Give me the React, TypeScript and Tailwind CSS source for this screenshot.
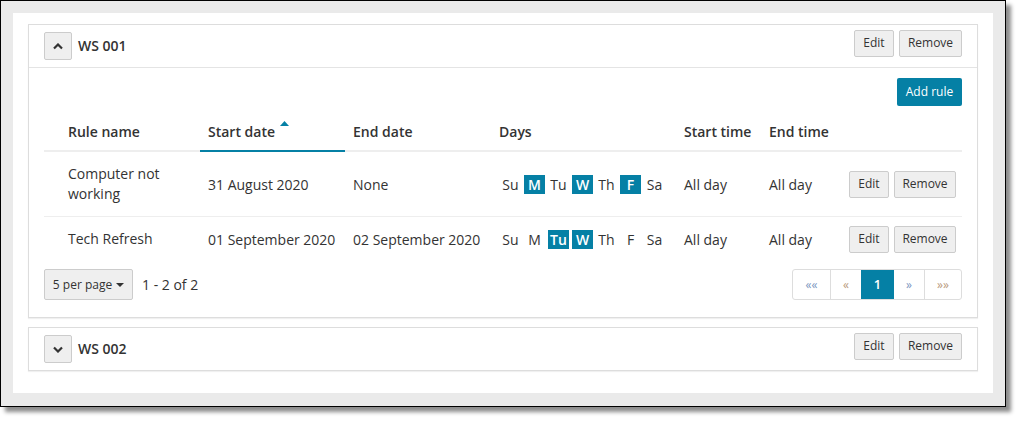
import React from 'react';

interface Rule {
  name: string;
  start: string;
  end: string;
  days: string[];
  rowHeight: string;
}

const DAYS = ['Su', 'M', 'Tu', 'W', 'Th', 'F', 'Sa'];

const rules: Rule[] = [
  { name: 'Computer not working', start: '31 August 2020', end: 'None', days: ['M', 'W', 'F'], rowHeight: 'h-[65px] border-b border-[#eeeeee]' },
  { name: 'Tech Refresh', start: '01 September 2020', end: '02 September 2020', days: ['Tu', 'W'], rowHeight: 'h-[44px]' },
];

const cols = 'grid grid-cols-[156px_145px_146px_185px_85px_80px_121px]';

function GreyButton({ label, className = '' }: { label: string; className?: string }) {
  return (
    <button className={`h-[27px] rounded-[2px] border border-[#cccccc] bg-[#efefef] text-[12px] text-[#333] ${className}`}>
      {label}
    </button>
  );
}

function Chevron({ up }: { up: boolean }) {
  return (
    <button className="flex h-[28px] w-[28px] items-center justify-center rounded-[2px] border border-[#cccccc] bg-[#efefef]">
      <svg width="10" height="7" viewBox="0 0 10 7">
        <polyline
          points={up ? '1,5.5 5,1.5 9,5.5' : '1,1.5 5,5.5 9,1.5'}
          fill="none"
          stroke="#333"
          strokeWidth="2.2"
        />
      </svg>
    </button>
  );
}

function CardHeader({ title, up }: { title: string; up: boolean }) {
  return (
    <div className="flex h-[42px] items-center px-[15px]">
      <Chevron up={up} />
      <span className="mb-[2px] ml-[6px] text-[14px] font-semibold text-[#333]">{title}</span>
      <div className="mb-[6px] ml-auto flex gap-[5px]">
        <GreyButton label="Edit" className="w-[40px]" />
        <GreyButton label="Remove" className="w-[63px]" />
      </div>
    </div>
  );
}

function DayCells({ active }: { active: string[] }) {
  return (
    <div className="flex gap-[3px]">
      {DAYS.map((d) => {
        const on = active.includes(d);
        return (
          <span
            key={d}
            className={`flex h-[19px] w-[21px] items-center justify-center text-[14px] ${
              on ? 'bg-[#0580a5] font-semibold text-white' : 'text-[#333]'
            }`}
          >
            {d}
          </span>
        );
      })}
    </div>
  );
}

export default function App() {
  return (
    <div className="h-[423px] w-[1021px] bg-white font-['Open_Sans',sans-serif] text-[#333]">
      <div className="h-[407px] w-[1006px] border border-black bg-[#eaeaea] p-[12px] shadow-[5px_5px_4px_rgba(0,0,0,0.45)]">
        <div className="h-[380px] w-[980px] bg-white px-[15px] pt-[11px]">
          {/* WS 001 */}
          <div className="border border-[#dddddd] shadow-[0_1px_1px_rgba(0,0,0,0.06)]">
            <CardHeader title="WS 001" up />
            <div className="border-t border-[#e4e4e4] px-[15px] pb-[17px] pt-[10px]">
              <div className="flex justify-end">
                <button className="h-[28px] w-[65px] rounded-[2px] bg-[#0580a5] text-[12px] text-white">Add rule</button>
              </div>

              <div className="mt-[6px]">
                <div className={`${cols} h-[40px] text-[14px] font-semibold`}>
                  <div className="flex items-center border-b-2 border-[#eeeeee] pl-[24px]">Rule name</div>
                  <div className="relative flex items-center border-b-2 border-[#0580a5] pl-[8px]">
                    Start date
                    <svg className="absolute left-[80px] top-[9px]" width="9" height="5" viewBox="0 0 9 5">
                      <polygon points="0,5 4.5,0 9,5" fill="#0580a5" />
                    </svg>
                  </div>
                  <div className="flex items-center border-b-2 border-[#eeeeee] pl-[8px]">End date</div>
                  <div className="flex items-center border-b-2 border-[#eeeeee] pl-[8px]">Days</div>
                  <div className="flex items-center border-b-2 border-[#eeeeee] pl-[8px]">Start time</div>
                  <div className="flex items-center border-b-2 border-[#eeeeee] pl-[8px]">End time</div>
                  <div className="border-b-2 border-[#eeeeee]" />
                </div>

                {rules.map((r) => (
                  <div key={r.name} className={`${cols} ${r.rowHeight} items-center text-[14px]`}>
                    <div className="pl-[24px] pr-[20px] leading-[20px]">{r.name}</div>
                    <div className="pl-[8px]">{r.start}</div>
                    <div className="pl-[8px]">{r.end}</div>
                    <div className="pl-[9px]">
                      <DayCells active={r.days} />
                    </div>
                    <div className="pl-[8px]">All day</div>
                    <div className="pl-[8px]">All day</div>
                    <div className="flex gap-[5px] pl-[8px]">
                      <GreyButton label="Edit" className="w-[40px]" />
                      <GreyButton label="Remove" className="w-[62px]" />
                    </div>
                  </div>
                ))}
              </div>

              <div className="mt-[8px] flex h-[31px] items-center">
                <button className="flex h-[31px] w-[89px] items-center justify-center gap-[4px] rounded-[2px] border border-[#cccccc] bg-[#efefef] text-[12px] text-[#333]">
                  5 per page
                  <svg width="8" height="4" viewBox="0 0 8 4">
                    <polygon points="0,0 8,0 4,4" fill="#333" />
                  </svg>
                </button>
                <span className="ml-[9px] text-[14px]">1 - 2 of 2</span>

                <div className="ml-auto flex h-[31px] overflow-hidden rounded-[3px] border border-[#dddddd] text-[12px]">
                  <span className="flex w-[37px] items-center justify-center text-[#7d97bf]">««</span>
                  <span className="flex w-[31px] items-center justify-center border-l border-[#dddddd] text-[#b99a7c]">«</span>
                  <span className="flex w-[33px] items-center justify-center bg-[#0580a5] text-[13px] font-semibold text-white">1</span>
                  <span className="flex w-[30px] items-center justify-center text-[#7d97bf]">»</span>
                  <span className="flex w-[37px] items-center justify-center border-l border-[#dddddd] text-[#b99a7c]">»»</span>
                </div>
              </div>
            </div>
          </div>

          {/* WS 002 */}
          <div className="mt-[9px] border border-[#dddddd] shadow-[0_1px_1px_rgba(0,0,0,0.06)]">
            <CardHeader title="WS 002" up={false} />
          </div>
        </div>
      </div>
    </div>
  );
}
